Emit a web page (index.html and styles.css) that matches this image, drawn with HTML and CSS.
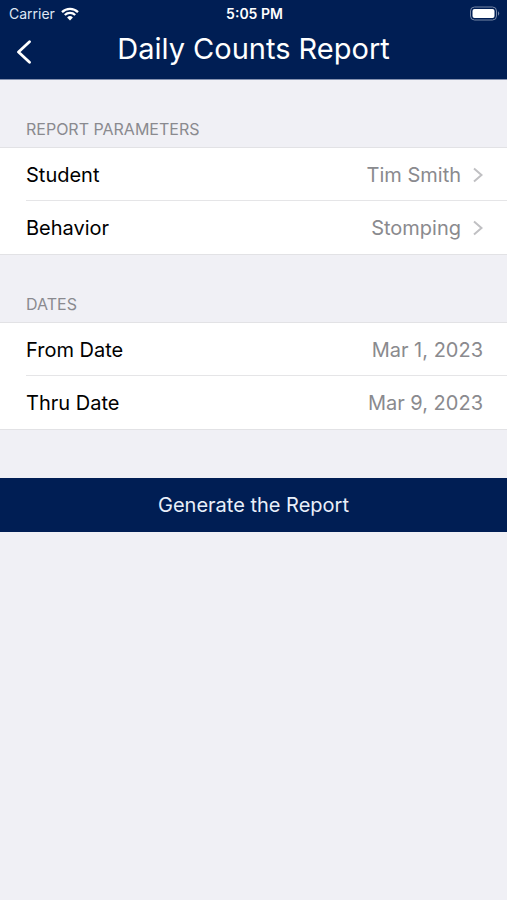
FILE: index.html
```html
<!DOCTYPE html>
<html lang="en">
<head>
  <meta charset="utf-8">
  <meta name="viewport" content="width=device-width, initial-scale=1">
  <title>Daily Counts Report</title>
  <link rel="stylesheet" href="styles.css">
</head>
<body>
  <header class="header">
    <div class="status">
      <div class="status-left">
        <span>Carrier</span>
        <svg class="wifi" viewBox="0 0 18 14" width="18" height="14" aria-hidden="true">
          <path d="M1 5.1a11.5 11.5 0 0 1 16 0M3.8 8a7.5 7.5 0 0 1 10.4 0" fill="none" stroke="currentColor" stroke-width="2.3"/>
          <path d="M9 13.4 6.1 10.5a4.1 4.1 0 0 1 5.8 0z" fill="currentColor"/>
        </svg>
      </div>
      <span class="status-time">5:05 PM</span>
      <svg class="battery" viewBox="0 0 31 15" width="31" height="15" aria-hidden="true">
        <rect x="1.5" y="1" width="26" height="13" rx="4" fill="none" stroke="#7787a6"/>
        <rect x="3.5" y="3" width="22" height="9" rx="2" fill="#fff"/>
        <path d="M29 5.2a2.8 2.8 0 0 1 0 4.6z" fill="#7787a6"/>
      </svg>
    </div>
    <div class="nav">
      <button class="back" type="button" aria-label="Back">
        <svg viewBox="0 0 16 24" width="16" height="24" aria-hidden="true">
          <path d="M13.5 1.8 2.5 12l11 10.2" fill="none" stroke="currentColor" stroke-width="2.8" stroke-linecap="round" stroke-linejoin="round"/>
        </svg>
      </button>
      <h1 class="title">Daily Counts Report</h1>
    </div>
  </header>
  <main>
    <section>
      <h2 class="section-title">REPORT PARAMETERS</h2>
      <div class="list">
        <button class="row" type="button">
          <span class="label">Student</span>
          <span class="value">Tim Smith</span>
          <svg class="chevron" viewBox="0 0 10 16" width="10" height="16" aria-hidden="true"><path d="M1 1.5 8.5 8 1 14.5"/></svg>
        </button>
        <button class="row" type="button">
          <span class="label">Behavior</span>
          <span class="value">Stomping</span>
          <svg class="chevron" viewBox="0 0 10 16" width="10" height="16" aria-hidden="true"><path d="M1 1.5 8.5 8 1 14.5"/></svg>
        </button>
      </div>
    </section>
    <section>
      <h2 class="section-title">DATES</h2>
      <div class="list">
        <button class="row" type="button">
          <span class="label">From Date</span>
          <span class="value">Mar 1, 2023</span>
        </button>
        <button class="row" type="button">
          <span class="label">Thru Date</span>
          <span class="value">Mar 9, 2023</span>
        </button>
      </div>
    </section>
    <button class="generate" type="button">Generate the Report</button>
  </main>
</body>
</html>
```
FILE: styles.css
```css
* {
  box-sizing: border-box;
}

body {
  margin: 0;
  background: #f0f0f5;
  color: #000;
  font-family: Inter, "Liberation Sans", sans-serif;
}

button {
  border: 0;
  font-family: inherit;
  cursor: pointer;
}

svg {
  display: block;
}

.header {
  height: 80px;
  border-bottom: 1px solid #8592b0;
  background: #001e54;
  color: #fff;
}

.status {
  display: grid;
  grid-template-columns: 1fr auto 1fr;
  align-items: center;
  height: 27px;
  padding: 0 7px 0 9px;
  font-size: 14px;
  line-height: 27px;
}

.status-left {
  display: flex;
  align-items: center;
  gap: 6px;
  color: #dfe6f3;
}

.wifi {
  color: #fff;
}

.status-time {
  font-weight: 600;
}

.battery {
  justify-self: end;
}

.nav {
  display: grid;
  grid-template-columns: 48px 1fr 48px;
  align-items: center;
  height: 44px;
}

.back {
  display: flex;
  padding: 6px 0 0 16px;
  background: none;
  color: #fff;
}

.title {
  margin: 0;
  font-size: 29px;
  font-weight: 400;
  line-height: 44px;
  text-align: center;
  white-space: nowrap;
}

.section-title {
  margin: 0;
  padding: 39px 26px 8px;
  color: #8a8a8f;
  font-size: 16px;
  font-weight: 400;
  line-height: 20px;
}

.list {
  border: solid #e2e2e5;
  border-width: 1px 0;
  background: #fff;
}

.row {
  display: flex;
  align-items: center;
  position: relative;
  width: 100%;
  height: 53px;
  padding: 0 24px 0 26px;
  background: none;
  font-size: 20px;
  line-height: 24px;
}

.row:not(:last-child)::after {
  position: absolute;
  right: 0;
  bottom: 0;
  left: 26px;
  border-bottom: 1px solid #e5e5e7;
  content: "";
}

.label {
  flex: 1;
  color: #000;
  text-align: left;
}

.value {
  color: #8a8a8e;
}

.chevron {
  margin-left: 12px;
  fill: none;
  stroke: #c0c0c3;
  stroke-width: 2;
}

.generate {
  display: block;
  width: 100%;
  height: 54px;
  margin-top: 48px;
  background: #001e54;
  color: #e9f0fa;
  font-size: 20px;
}
```
